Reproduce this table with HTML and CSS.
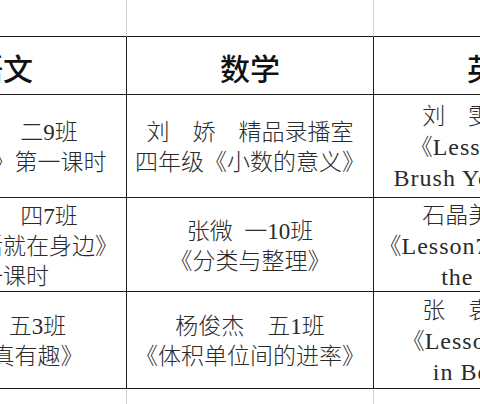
FILE: index.html
```html
<!DOCTYPE html>
<html lang="zh-CN">
<head>
<meta charset="utf-8">
<title>课表</title>
<link rel="stylesheet" href="styles.css">
</head>
<body>
<div class="viewport">
  <div class="sheet">
    <div class="strip top"></div><div class="strip top"></div><div class="strip top"></div>

    <div class="cell head">语文</div>
    <div class="cell head">数学</div>
    <div class="cell head">英语</div>

    <div class="cell r1">
      <div class="line">李晓红　二9班</div>
      <div class="line">《找春天》第一课时</div>
    </div>
    <div class="cell r1">
      <div class="line">刘　娇　精品录播室</div>
      <div class="line">四年级《小数的意义》</div>
    </div>
    <div class="cell r1">
      <div class="line">刘　雯　三2班</div>
      <div class="line">《<span class="en">Lesson 6 Let's</span></div>
      <div class="line"><span class="en">Brush Your Teeth</span>》</div>
    </div>

    <div class="cell r2">
      <div class="line">赵文静　四7班</div>
      <div class="line">《美好生活就在身边》</div>
      <div class="line">第一课时</div>
    </div>
    <div class="cell r2">
      <div class="line">张微&ensp;一10班</div>
      <div class="line">《分类与整理》</div>
    </div>
    <div class="cell r2">
      <div class="line">石晶美　三7班</div>
      <div class="line">《<span class="en">Lesson7 Animals on</span></div>
      <div class="line"><span class="en">the farm</span>》</div>
    </div>

    <div class="cell r3">
      <div class="line">王丽　五3班</div>
      <div class="line">《汉字真有趣》</div>
    </div>
    <div class="cell r3">
      <div class="line">杨俊杰　五1班</div>
      <div class="line">《体积单位间的进率》</div>
    </div>
    <div class="cell r3">
      <div class="line">张　袁　三1班</div>
      <div class="line">《<span class="en">Lesson 3 A Trip</span></div>
      <div class="line"><span class="en">in Beijing</span>》</div>
    </div>

    <div class="strip bottom"></div><div class="strip bottom"></div><div class="strip bottom"></div>
  </div>
</div>
</body>
</html>
```
FILE: styles.css
```css
html, body {
  margin: 0;
  padding: 0;
  background: #ffffff;
}

.viewport {
  width: 480px;
  height: 404px;
  overflow: hidden;
}

.sheet {
  display: grid;
  grid-template-columns: 247px 247px 247px;
  grid-template-rows: 37px 58px 103px 94px 97px 40px;
  width: 741px;
  margin-left: -120px;
  font-family: "Liberation Serif", "Noto Sans CJK SC", serif;
  color: #2a2a2a;
}

.strip {
  border-right: 1px solid #d2d2d2;
  box-sizing: border-box;
}

.strip.top {
  border-bottom: 1px solid #1c1c1c;
}

.cell {
  box-sizing: border-box;
  border-right: 1px solid #1c1c1c;
  border-bottom: 1px solid #1c1c1c;
  display: flex;
  flex-direction: column;
  align-items: center;
  justify-content: center;
  font-size: 23px;
  font-weight: 300;
  line-height: 30px;
  padding-top: 4px;
}

.cell.head {
  font-family: "Noto Sans CJK SC", serif;
  font-size: 30px;
  font-weight: 500;
  line-height: 40px;
  padding-top: 2px;
  color: #111111;
}

.line {
  white-space: nowrap;
}

.en {
  font-family: "Liberation Serif", serif;
  font-size: 24px;
  letter-spacing: 1px;
  font-weight: 400;
}
```
